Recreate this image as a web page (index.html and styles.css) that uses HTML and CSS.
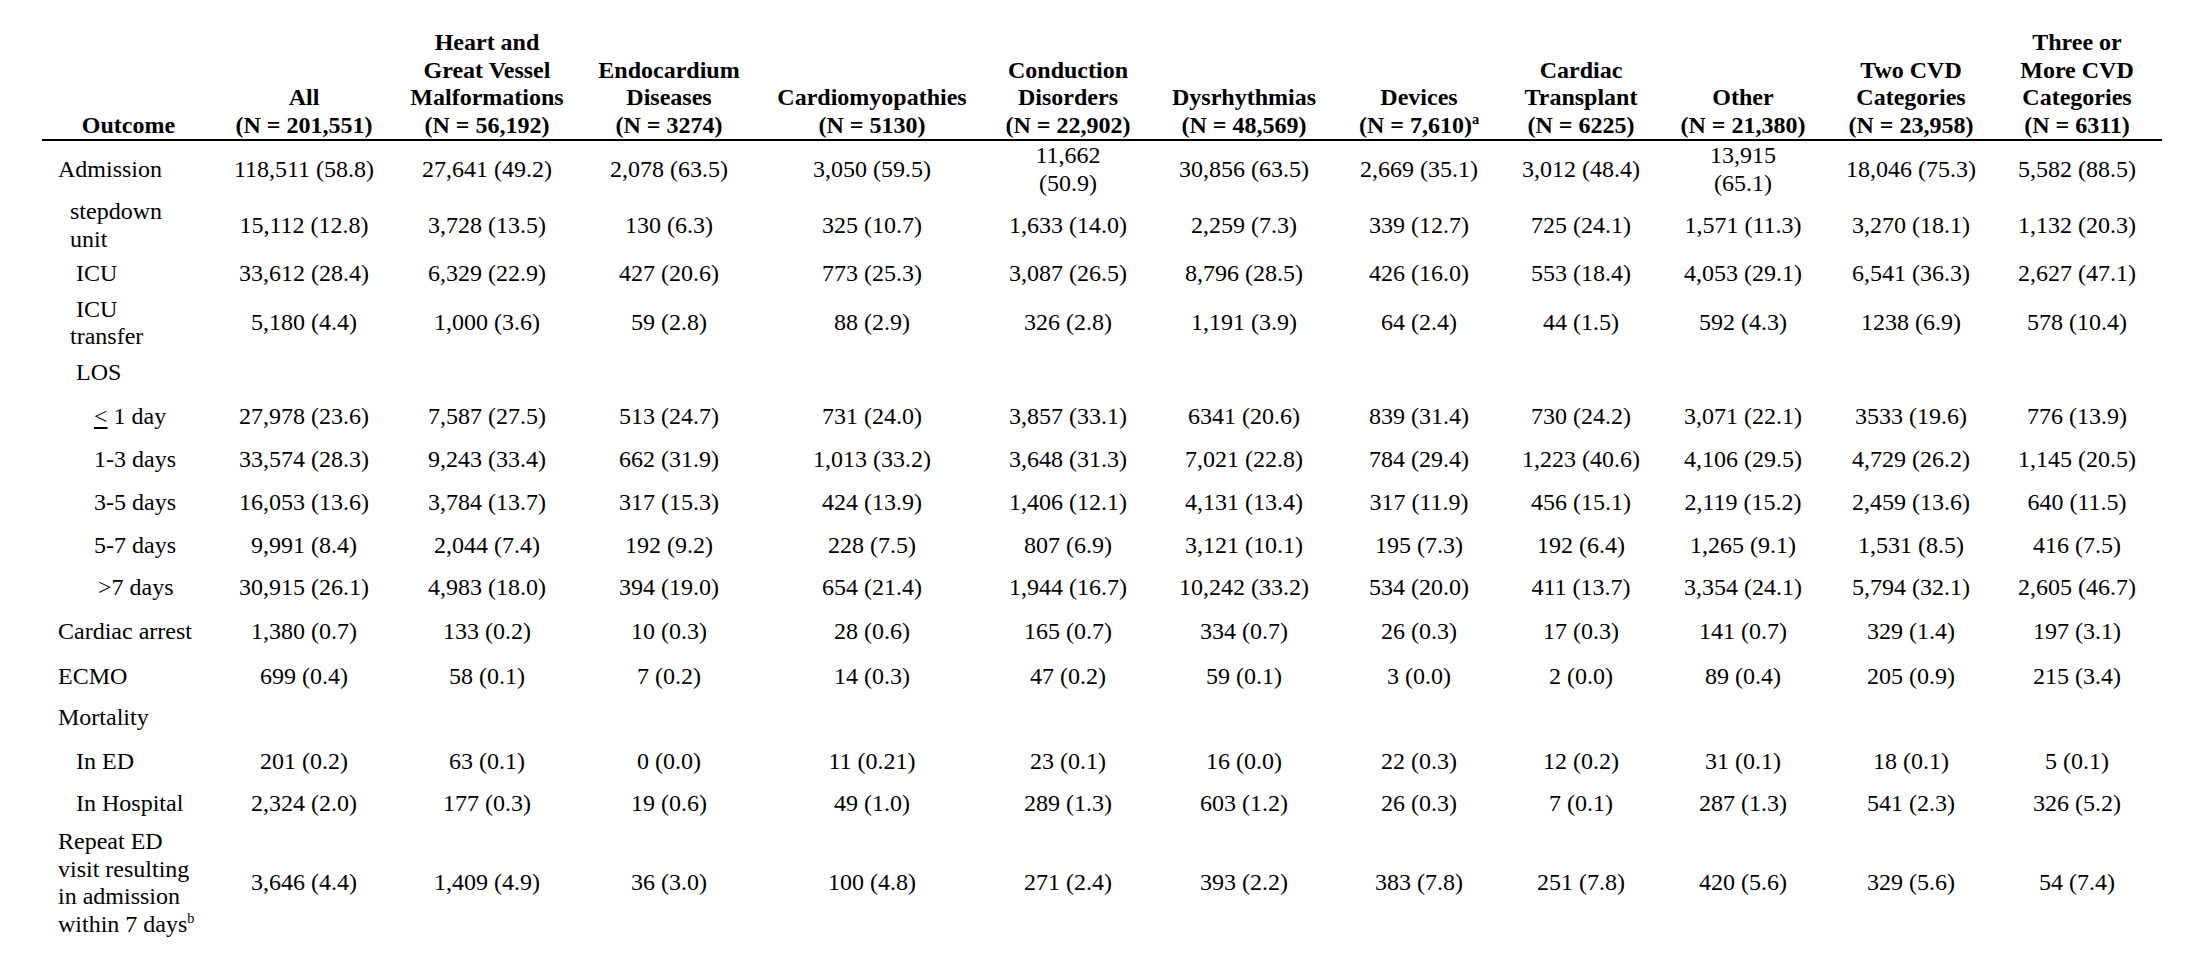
FILE: index.html
```html
<!DOCTYPE html>
<html lang="en">
<head>
<meta charset="utf-8">
<title>Outcomes by CVD category</title>
<link rel="stylesheet" href="styles.css">
</head>
<body>
<div class="page">
<table class="outcomes">
  <colgroup>
    <col class="c-label"><col class="c-all"><col class="c-heart"><col class="c-endo"><col class="c-cardio"><col class="c-cond"><col class="c-dys"><col class="c-dev"><col class="c-tx"><col class="c-other"><col class="c-two"><col class="c-three">
  </colgroup>
  <thead>
    <tr>
      <th class="h-outcome">Outcome</th>
      <th>All<br>(N = 201,551)</th>
      <th>Heart and<br>Great Vessel<br>Malformations<br>(N = 56,192)</th>
      <th>Endocardium<br>Diseases<br>(N = 3274)</th>
      <th>Cardiomyopathies<br>(N = 5130)</th>
      <th>Conduction<br>Disorders<br>(N = 22,902)</th>
      <th>Dysrhythmias<br>(N = 48,569)</th>
      <th>Devices<br>(N = 7,610)<sup>a</sup></th>
      <th>Cardiac<br>Transplant<br>(N = 6225)</th>
      <th>Other<br>(N = 21,380)</th>
      <th>Two CVD<br>Categories<br>(N = 23,958)</th>
      <th>Three or<br>More CVD<br>Categories<br>(N = 6311)</th>
    </tr>
  </thead>
  <tbody>
    <tr class="r-admit">
      <td class="lbl">Admission</td>
      <td>118,511 (58.8)</td><td>27,641 (49.2)</td><td>2,078 (63.5)</td><td>3,050 (59.5)</td><td>11,662<br>(50.9)</td><td>30,856 (63.5)</td><td>2,669 (35.1)</td><td>3,012 (48.4)</td><td>13,915<br>(65.1)</td><td>18,046 (75.3)</td><td>5,582 (88.5)</td>
    </tr>
    <tr class="r-step">
      <td class="lbl ind1">stepdown<br>unit</td>
      <td>15,112 (12.8)</td><td>3,728 (13.5)</td><td>130 (6.3)</td><td>325 (10.7)</td><td>1,633 (14.0)</td><td>2,259 (7.3)</td><td>339 (12.7)</td><td>725 (24.1)</td><td>1,571 (11.3)</td><td>3,270 (18.1)</td><td>1,132 (20.3)</td>
    </tr>
    <tr class="r-icu">
      <td class="lbl ind1">&nbsp;ICU</td>
      <td>33,612 (28.4)</td><td>6,329 (22.9)</td><td>427 (20.6)</td><td>773 (25.3)</td><td>3,087 (26.5)</td><td>8,796 (28.5)</td><td>426 (16.0)</td><td>553 (18.4)</td><td>4,053 (29.1)</td><td>6,541 (36.3)</td><td>2,627 (47.1)</td>
    </tr>
    <tr class="r-icut">
      <td class="lbl ind1">&nbsp;ICU<br>transfer</td>
      <td>5,180 (4.4)</td><td>1,000 (3.6)</td><td>59 (2.8)</td><td>88 (2.9)</td><td>326 (2.8)</td><td>1,191 (3.9)</td><td>64 (2.4)</td><td>44 (1.5)</td><td>592 (4.3)</td><td>1238 (6.9)</td><td>578 (10.4)</td>
    </tr>
    <tr class="r-los">
      <td class="lbl ind1">&nbsp;LOS</td>
      <td></td><td></td><td></td><td></td><td></td><td></td><td></td><td></td><td></td><td></td><td></td>
    </tr>
    <tr class="r-d1">
      <td class="lbl ind2"><span class="uline">&lt;</span> 1 day</td>
      <td>27,978 (23.6)</td><td>7,587 (27.5)</td><td>513 (24.7)</td><td>731 (24.0)</td><td>3,857 (33.1)</td><td>6341 (20.6)</td><td>839 (31.4)</td><td>730 (24.2)</td><td>3,071 (22.1)</td><td>3533 (19.6)</td><td>776 (13.9)</td>
    </tr>
    <tr class="r-d3">
      <td class="lbl ind2">1-3 days</td>
      <td>33,574 (28.3)</td><td>9,243 (33.4)</td><td>662 (31.9)</td><td>1,013 (33.2)</td><td>3,648 (31.3)</td><td>7,021 (22.8)</td><td>784 (29.4)</td><td>1,223 (40.6)</td><td>4,106 (29.5)</td><td>4,729 (26.2)</td><td>1,145 (20.5)</td>
    </tr>
    <tr class="r-d5">
      <td class="lbl ind2">3-5 days</td>
      <td>16,053 (13.6)</td><td>3,784 (13.7)</td><td>317 (15.3)</td><td>424 (13.9)</td><td>1,406 (12.1)</td><td>4,131 (13.4)</td><td>317 (11.9)</td><td>456 (15.1)</td><td>2,119 (15.2)</td><td>2,459 (13.6)</td><td>640 (11.5)</td>
    </tr>
    <tr class="r-d7">
      <td class="lbl ind2">5-7 days</td>
      <td>9,991 (8.4)</td><td>2,044 (7.4)</td><td>192 (9.2)</td><td>228 (7.5)</td><td>807 (6.9)</td><td>3,121 (10.1)</td><td>195 (7.3)</td><td>192 (6.4)</td><td>1,265 (9.1)</td><td>1,531 (8.5)</td><td>416 (7.5)</td>
    </tr>
    <tr class="r-d8">
      <td class="lbl ind3">&gt;7 days</td>
      <td>30,915 (26.1)</td><td>4,983 (18.0)</td><td>394 (19.0)</td><td>654 (21.4)</td><td>1,944 (16.7)</td><td>10,242 (33.2)</td><td>534 (20.0)</td><td>411 (13.7)</td><td>3,354 (24.1)</td><td>5,794 (32.1)</td><td>2,605 (46.7)</td>
    </tr>
    <tr class="r-arrest">
      <td class="lbl">Cardiac arrest</td>
      <td>1,380 (0.7)</td><td>133 (0.2)</td><td>10 (0.3)</td><td>28 (0.6)</td><td>165 (0.7)</td><td>334 (0.7)</td><td>26 (0.3)</td><td>17 (0.3)</td><td>141 (0.7)</td><td>329 (1.4)</td><td>197 (3.1)</td>
    </tr>
    <tr class="r-ecmo">
      <td class="lbl">ECMO</td>
      <td>699 (0.4)</td><td>58 (0.1)</td><td>7 (0.2)</td><td>14 (0.3)</td><td>47 (0.2)</td><td>59 (0.1)</td><td>3 (0.0)</td><td>2 (0.0)</td><td>89 (0.4)</td><td>205 (0.9)</td><td>215 (3.4)</td>
    </tr>
    <tr class="r-mort">
      <td class="lbl">Mortality</td>
      <td></td><td></td><td></td><td></td><td></td><td></td><td></td><td></td><td></td><td></td><td></td>
    </tr>
    <tr class="r-ed">
      <td class="lbl ind1">&nbsp;In ED</td>
      <td>201 (0.2)</td><td>63 (0.1)</td><td>0 (0.0)</td><td>11 (0.21)</td><td>23 (0.1)</td><td>16 (0.0)</td><td>22 (0.3)</td><td>12 (0.2)</td><td>31 (0.1)</td><td>18 (0.1)</td><td>5 (0.1)</td>
    </tr>
    <tr class="r-hosp">
      <td class="lbl ind1">&nbsp;In Hospital</td>
      <td>2,324 (2.0)</td><td>177 (0.3)</td><td>19 (0.6)</td><td>49 (1.0)</td><td>289 (1.3)</td><td>603 (1.2)</td><td>26 (0.3)</td><td>7 (0.1)</td><td>287 (1.3)</td><td>541 (2.3)</td><td>326 (5.2)</td>
    </tr>
    <tr class="r-repeat">
      <td class="lbl">Repeat ED<br>visit resulting<br>in admission<br>within 7 days<sup>b</sup></td>
      <td>3,646 (4.4)</td><td>1,409 (4.9)</td><td>36 (3.0)</td><td>100 (4.8)</td><td>271 (2.4)</td><td>393 (2.2)</td><td>383 (7.8)</td><td>251 (7.8)</td><td>420 (5.6)</td><td>329 (5.6)</td><td>54 (7.4)</td>
    </tr>
  </tbody>
</table>
</div>
</body>
</html>
```

FILE: styles.css
```css
html, body {
  margin: 0;
  padding: 0;
  background: #ffffff;
}

.page {
  padding: 29px 0 0 42px;
  overflow: hidden;
}

.outcomes {
  border-collapse: collapse;
  border-spacing: 0;
  table-layout: fixed;
  width: 2120px;
  font-family: "Liberation Serif", "Times New Roman", serif;
  font-size: 24px;
  line-height: 27.5px;
  color: #000;
}

.c-label { width: 166px; }
.c-all { width: 192px; }
.c-heart { width: 174px; }
.c-endo { width: 190px; }
.c-cardio { width: 216px; }
.c-cond { width: 176px; }
.c-dys { width: 176px; }
.c-dev { width: 174px; }
.c-tx { width: 150px; }
.c-other { width: 174px; }
.c-two { width: 162px; }
.c-three { width: 170px; }

.outcomes th {
  font-weight: bold;
  text-align: center;
  vertical-align: bottom;
  padding: 0;
  height: 110px;
  white-space: nowrap;
  border-bottom: 2px solid #000;
}

.outcomes th.h-outcome {
  padding-left: 7px;
}

.outcomes td {
  padding: 0;
  text-align: center;
  vertical-align: middle;
  white-space: nowrap;
}

.outcomes td.lbl {
  text-align: left;
  padding-left: 16px;
}

.outcomes td.ind1 { padding-left: 28px; }
.outcomes td.ind2 { padding-left: 52px; }
.outcomes td.ind3 { padding-left: 56px; }

.uline {
  text-decoration: underline;
  text-underline-offset: 3px;
}

sup {
  font-size: 0.6em;
  line-height: 0;
  vertical-align: 0.6em;
}

.r-admit td { height: 57px; }
.r-step td { height: 55px; }
.r-icu td { height: 42px; }
.r-icut td { height: 56px; }
.r-los td { height: 43px; }
.r-d1 td { height: 45px; }
.r-d3 td { height: 42px; }
.r-d5 td { height: 43px; }
.r-d7 td { height: 43px; }
.r-d8 td { height: 42px; }
.r-arrest td { height: 46px; }
.r-ecmo td { height: 43px; }
.r-mort td { height: 40px; }
.r-ed td { height: 48px; }
.r-hosp td { height: 35px; }
.r-repeat td { height: 124px; }
```
